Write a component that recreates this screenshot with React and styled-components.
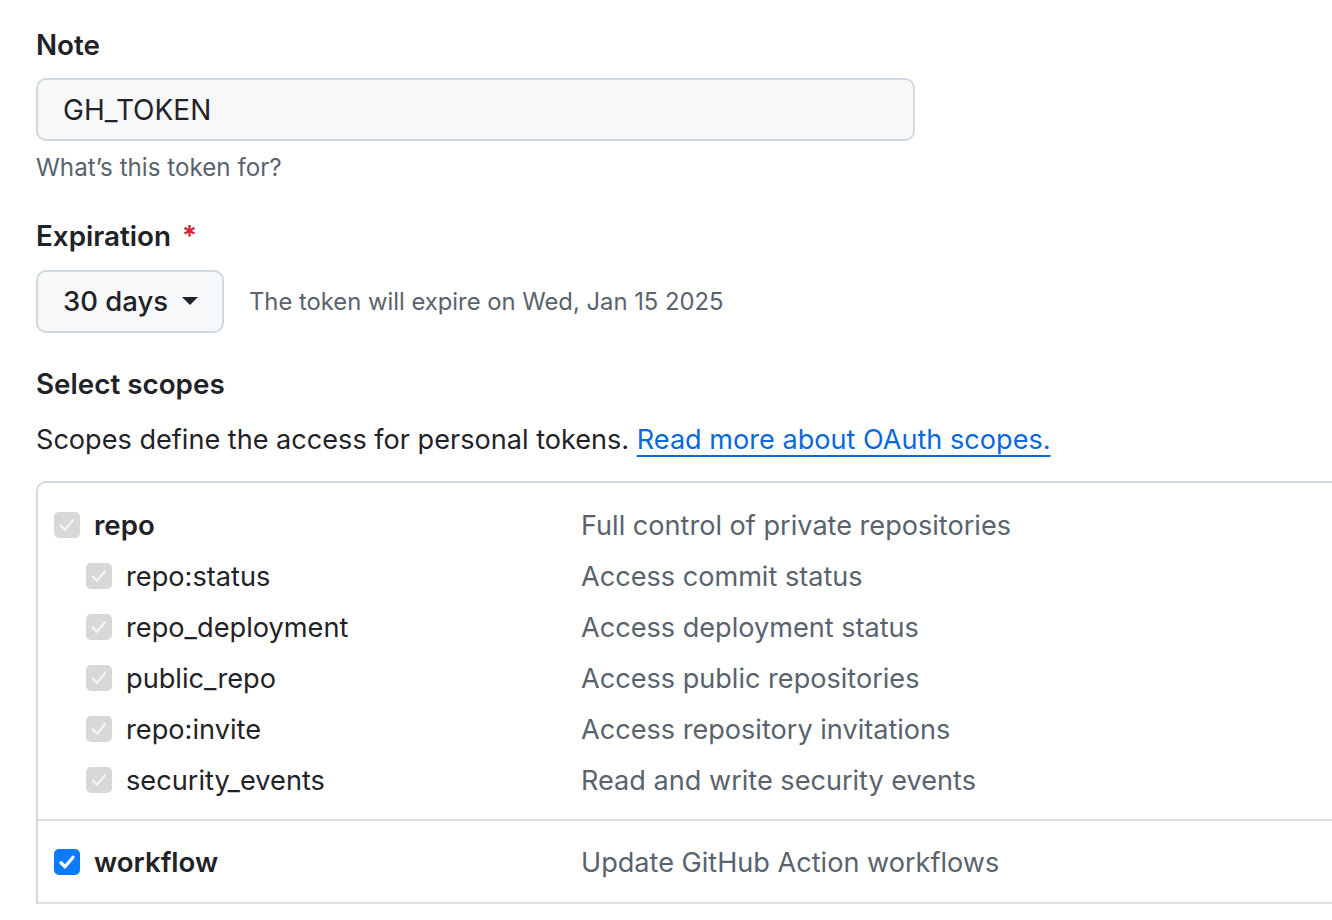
import React from "react";
import styled, { createGlobalStyle } from "styled-components";

const GlobalStyle = createGlobalStyle`
    body {
        margin: 0;
        background: #ffffff;
        overflow: hidden;
        font-family: Inter, "Liberation Sans", sans-serif;
        color: #1f2328;
    }
`;

const Page = styled.div`
    padding: 28px 0 0 36px;
    width: 1500px;
`;

const Label = styled.div`
    font-size: 27.8px;
    font-weight: 600;
    line-height: 35px;
    margin-top: ${(p) => p.$top || 0}px;
`;

const Required = styled.span`
    color: #d1242f;
    margin-left: 11px;
`;

const TextInput = styled.div`
    box-sizing: border-box;
    width: 879px;
    height: 63px;
    margin-top: 15px;
    padding: 0 25px;
    display: flex;
    align-items: center;
    background: #f6f8fa;
    border: 2px solid #d1d9e0;
    border-radius: 10px;
    font-size: 28px;
`;

const Hint = styled.div`
    font-size: 24.2px;
    line-height: 30px;
    margin-top: 12px;
    color: #59636e;
`;

const ExpiryRow = styled.div`
    display: flex;
    align-items: center;
    gap: 25px;
    margin-top: 15.5px;
`;

const SelectButton = styled.div`
    box-sizing: border-box;
    height: 63px;
    width: 188px;
    padding: 0 24px 0 25px;
    display: flex;
    align-items: center;
    justify-content: space-between;
    background: #f6f8fa;
    border: 2px solid #d1d9e0;
    border-radius: 10px;
    font-size: 27.5px;
    font-weight: 500;
`;

const Caret = styled.span`
    width: 0;
    height: 0;
    border-left: 8px solid transparent;
    border-right: 8px solid transparent;
    border-top: 8px solid #1f2328;
`;

const Muted = styled.span`
    font-size: 23.8px;
    color: #59636e;
`;

const Intro = styled.div`
    font-size: 27.1px;
    line-height: 35px;
    margin-top: 20px;
`;

const Link = styled.a`
    color: #0969da;
    text-decoration: underline;
    text-underline-offset: 6px;
    text-decoration-thickness: 2px;
    text-decoration-skip-ink: none;
`;

const ScopeTable = styled.div`
    margin-top: 23.5px;
    border: 2px solid #d1d9e0;
    border-radius: 10px 0 0 0;
    border-right: none;
    border-bottom: none;
`;

const Group = styled.div`
    padding: ${(p) => (p.$tight ? "16px 0 14px" : "17px 0 13px")};
    border-bottom: 2px solid #dde2e7;
`;

const Row = styled.div`
    display: grid;
    grid-template-columns: 543px 1fr;
    align-items: center;
    height: 51px;
`;

const Scope = styled.div`
    display: flex;
    align-items: center;
    gap: 14px;
    padding-left: ${(p) => (p.$child ? 48 : 16)}px;
    font-size: ${(p) => (p.$child ? 27.2 : 27.6)}px;
    font-weight: ${(p) => (p.$child ? 400 : 600)};
`;

const Box = styled.span`
    box-sizing: border-box;
    flex: none;
    width: 26px;
    height: 26px;
    border-radius: 5px;
    display: flex;
    align-items: center;
    justify-content: center;
    background: ${(p) => (p.$checked ? "#0b7bfe" : "#d8d8d8")};
`;

const Desc = styled.div`
    font-size: 27.1px;
    color: #59636e;
`;

const Check = ({ checked }) => (
    <Box $checked={checked}>
        <svg width="20" height="20" viewBox="0 0 16 16">
            <path
                d="M3.2 8.6 L6.4 11.8 L12.8 4.2"
                fill="none"
                stroke={checked ? "#ffffff" : "#f2f2f2"}
                strokeWidth={checked ? 2.6 : 2.1}
                strokeLinecap="round"
                strokeLinejoin="round"
            />
        </svg>
    </Box>
);

const repoScopes = [
    ["repo:status", "Access commit status"],
    ["repo_deployment", "Access deployment status"],
    ["public_repo", "Access public repositories"],
    ["repo:invite", "Access repository invitations"],
    ["security_events", "Read and write security events"],
];

export default function App() {
    return (
        <Page>
            <GlobalStyle />
            <Label>Note</Label>
            <TextInput>GH_TOKEN</TextInput>
            <Hint>What’s this token for?</Hint>

            <Label $top={36}>
                Expiration<Required>*</Required>
            </Label>
            <ExpiryRow>
                <SelectButton>
                    30 days <Caret />
                </SelectButton>
                <Muted>The token will expire on Wed, Jan 15 2025</Muted>
            </ExpiryRow>

            <Label $top={34.5}>Select scopes</Label>
            <Intro>
                Scopes define the access for personal tokens.{" "}
                <Link href="#">Read more about OAuth scopes.</Link>
            </Intro>

            <ScopeTable>
                <Group>
                    <Row>
                        <Scope>
                            <Check />
                            repo
                        </Scope>
                        <Desc>Full control of private repositories</Desc>
                    </Row>
                    {repoScopes.map(([name, desc]) => (
                        <Row key={name}>
                            <Scope $child>
                                <Check />
                                {name}
                            </Scope>
                            <Desc>{desc}</Desc>
                        </Row>
                    ))}
                </Group>
                <Group $tight>
                    <Row>
                        <Scope>
                            <Check checked />
                            workflow
                        </Scope>
                        <Desc>Update GitHub Action workflows</Desc>
                    </Row>
                </Group>
            </ScopeTable>
        </Page>
    );
}
